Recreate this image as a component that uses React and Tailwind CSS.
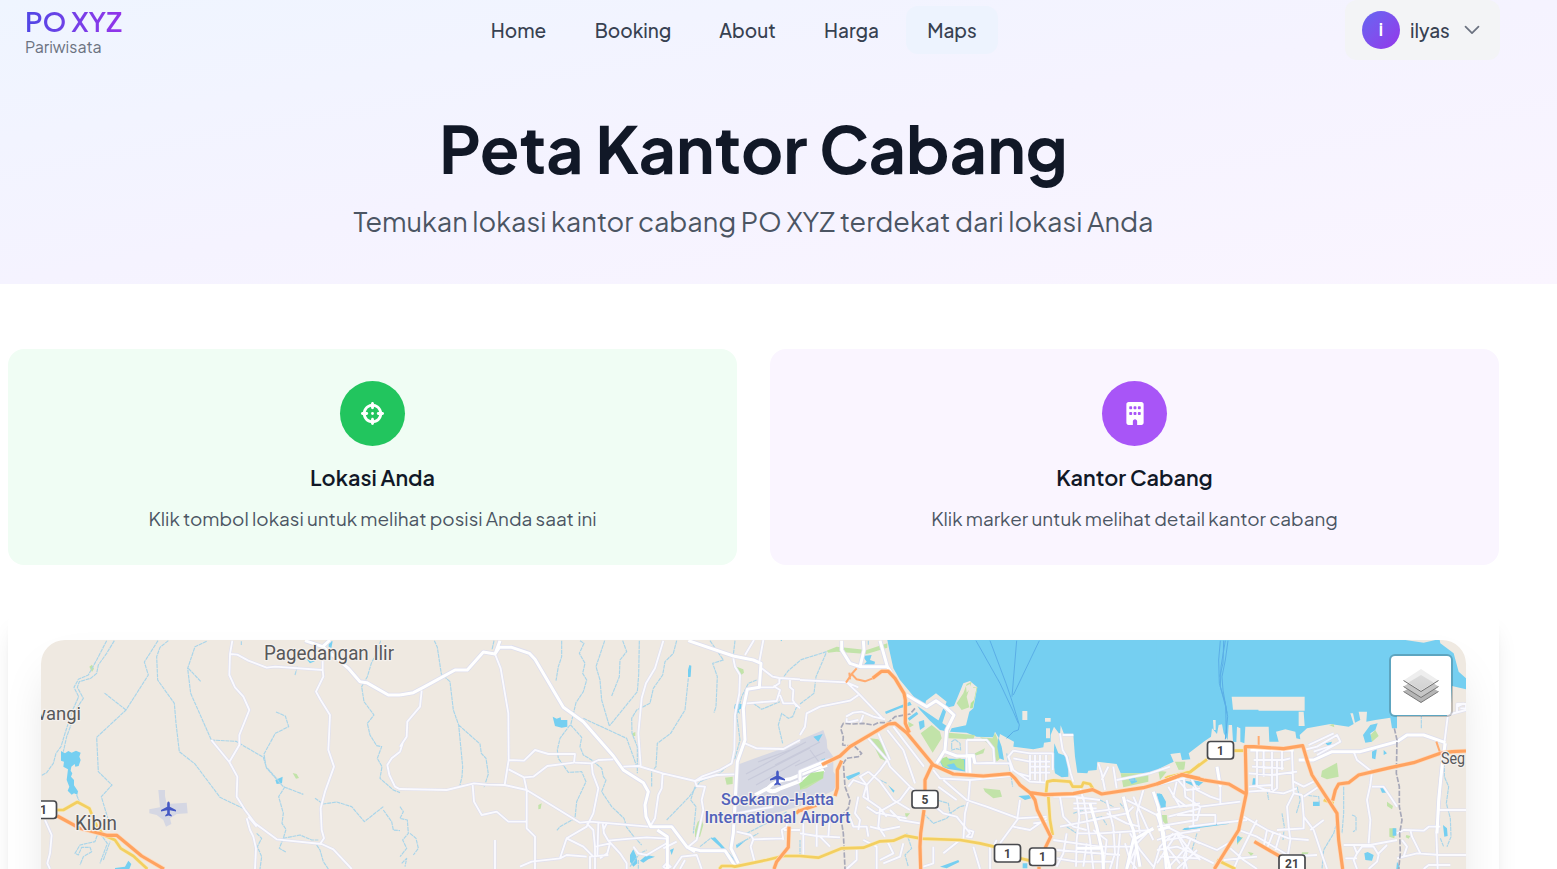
import React from "react";
import { FaBuilding, FaCrosshairs } from "react-icons/fa6";

/* Map geometry: four sheets drawn at three units per pixel. */
const sheets = [
  {
    at: "translate(0 600) scale(.33333)",
    airport: "M475,570H495V588L500,612L560,608L563,640L530,642L510,655L514,672L498,680L490,660L470,645L448,640V628L480,622Z",
    water:
      "M183,453L195,460L205,453L215,458L228,452L242,458L238,470L242,480L236,498L226,500L224,492L214,500L212,512L217,520L213,530L222,540L222,556L234,574L232,584L222,580L215,584L203,572L208,560L200,540L204,508L190,500L192,485L183,482ZM826,540L848,530L846,550L830,552ZM986,124H998L994,145L986,140ZM920,178L948,182L930,190ZM345,804L375,800L385,782L394,792L388,807H345Z",
    park: "M268,200L276,194L282,206L276,216ZM878,519L890,522L897,534L888,536Z",
    stream:
      "M320,122L290,180L265,225L235,238L222,262L236,290L218,330L195,400L183,440L168,460L160,490L140,518L124,527M343,122L320,160L295,195L290,220L272,235L238,245L232,262L250,295L232,322L214,372L200,410L190,455M474,122L433,186L445,225L378,330L290,412L295,515L336,555L304,590L325,660L290,710L285,725L240,735L225,760L235,765L245,742L270,742L275,755L250,770L240,795M378,330L312,278M505,122L480,142L470,170L473,240L523,310L528,370L538,455L585,492L660,592L735,628M620,124L585,140L563,205L572,280L634,420L708,424L790,472L800,505L850,560L910,583M565,205L602,244M828,336L856,348L866,380L826,400L792,462L798,500L838,545M855,560L836,590L850,640L846,670L858,688L850,715L838,745L858,756M850,715L900,705L935,720L955,720M945,595L970,612L1010,606L1055,620L1093,665L1150,620M1142,122L1134,150L1114,190L1102,230L1085,260L1092,305L1122,345L1102,370L1110,405L1130,437L1145,440L1132,475L1146,500L1140,535L1180,570L1200,578M724,124V135M950,735L960,750L970,785L985,807M885,225L892,200M770,700L785,715L772,740L785,770L780,807M310,780L330,725M230,585L240,610M300,700L322,730L300,790M1150,630L1175,665L1180,690L1200,692",
    minor:
      "M697,122L690,162L688,225L705,262L730,290L748,330L718,405L718,435L688,486L712,530L710,590L735,630L765,670L830,718L965,732L1000,748L1055,807M634,420L688,486M690,162L712,164L745,182L800,203L825,200L968,210L970,230L948,275L962,300L990,345L985,450L1002,500L975,575L962,625L965,690L972,715L960,732M968,140V210M1200,455L1175,475L1162,495L1168,525L1185,560L1200,568M740,655L750,690L760,710L768,745L765,807M135,660L155,705L150,760L142,790L150,807M745,650L770,680",
    major: "M915,122L968,140L1045,205L1080,245L1100,248L1165,285L1200,285M990,120L968,140",
    yellow: "M172,630H190L232,606L268,625L285,668L310,705L345,720L362,745L400,768L442,807",
    orange: "M172,648L240,685L320,706H350L425,768L492,807",
  },
  {
    at: "translate(400 600) scale(.33333)",
    airport: "M1010,495L1120,455L1200,428V618L1125,640L1010,670Z",
    water:
      "M458,350L470,356L482,352L483,360H502V380L485,383L465,378ZM868,195L874,197L872,230L864,232V210ZM1005,312H1025V325L1016,330L1020,342L1002,325ZM690,765L700,748L710,770L712,790L700,800L690,785ZM720,782L740,765L765,770L745,778L730,788ZM810,750L822,745L815,765ZM932,715L945,712L980,750L1010,785L1000,790L960,740ZM1140,118H1148L1144,124ZM1008,735L1045,715L1010,745Z",
    park: "M1010,200L1030,208L1032,218L1020,228ZM975,533L998,530V552L980,554ZM893,665L905,658L910,675L900,710L885,712V690ZM697,400L706,396V408H698ZM1195,548L1200,545V560ZM415,615L425,610L422,626L415,628Z",
    stream:
      "M103,122L112,142L124,222L150,245L160,330L176,375L188,500L186,530L180,555M176,375L240,432L244,460L258,475L265,522L252,562M282,122L276,150M485,122V170L475,200L468,242M540,122L552,130L538,160L555,190L548,220L560,240L550,275L528,308L512,375L545,412L540,440L550,465L575,480L605,505L610,530L618,540L605,575L635,620L672,655L680,682L700,708L725,735M614,122L588,200L600,240L605,300L628,378M668,122L680,155L660,180L658,230L635,288M718,122L716,225L712,275L628,378M830,122L820,160L795,185L788,225L760,265L750,310L710,330L695,355L696,400L712,440L712,520M865,235L855,330L812,400L772,430L768,500L755,515V560M550,355L680,415L700,470L712,505M510,375L480,415L472,450L475,475L505,517L545,515L558,545L530,605L525,655L480,680L470,692M930,122L970,180L938,190L952,230L948,320L942,338M1070,240L1045,250L1025,290L1010,345L1020,420L1005,475L960,520L900,545L868,590L800,660M885,560L872,600L888,620L880,700M1200,182L1165,212L1140,245M1190,320L1178,350L1165,355L1145,340L1135,375L1148,430M1060,310L1085,328L1140,305M1005,122L1000,165M0,620L10,635L0,655L22,660L25,700L8,720L20,745L0,770M30,700L48,715L55,745L40,765M1040,700L1100,670L1160,635M5,790L20,775L15,800M1010,735L1075,700M690,800L720,760L740,750M900,740L935,712M715,780V807",
    minor:
      "M65,272L60,320L22,365L20,410L0,440M8,430L0,455M285,162L302,205L325,340L326,480L314,555M326,480L372,482L405,450L445,462L525,462L522,488L442,498L400,530L372,532L380,570V685L405,710V807M525,488L575,490L595,480L640,478M575,490L578,520L595,565L580,640L560,680L500,715L480,775M326,508L372,532M0,567L140,570L222,550L260,554L314,555L380,570L540,668L570,665L745,680M218,555L222,605L245,645L290,635L325,665L380,664M670,500L715,498L788,520L885,543L890,558L915,560L905,600L910,630L890,720L865,740M788,520L785,565L775,585L765,655L750,680M790,122L765,205L738,250L725,295L715,400L722,498M885,543L950,525L1003,523M1000,175L1005,200L1020,225L1018,280L1005,345L1003,450L995,490L960,510L905,530L885,543M1090,120L1078,185M1062,120L1035,165M1085,205L1118,230L1138,234L1200,238M1138,234V250L1120,262H1078M1170,238V262L1180,270L1178,300L1190,320M1040,310L1130,303L1140,270L1120,258M1140,285L1150,310H1185L1200,325M1035,430L1070,445L1150,447L1200,420M285,720V807M360,800L395,785L480,775L500,765L560,770M500,715L550,740L580,770M560,670L580,690L585,740V807M585,740L630,730L622,760L600,775M595,670L592,770M608,670L612,700L625,722L700,715L740,712L800,716M620,670L610,690M625,722L660,760L680,790L680,807M625,765L570,770V807M800,730L740,765L715,760L700,740M830,725L790,745M820,807L845,770L890,765L905,807M840,807L855,780M1010,695L1052,705L1060,718L1150,715M1060,718L1052,740L1065,790M1160,640V680L1145,690L1150,720M1010,640L1120,620M1005,665L1120,655M1152,690H1200M790,800L800,790L812,800L800,807Z",
    major:
      "M0,285L40,278L70,262L165,210H202L250,156L285,162L298,142H335L388,160L405,178L490,322L550,365L640,468L670,510L730,548L745,575L735,615L738,650L752,680H815L862,742L900,752H975L1000,790L1010,803M285,162L300,122M772,690L802,710V807M865,122L1000,168L1060,180L1083,190L1078,262L1042,268L1030,325L1035,420L1012,485L1000,700L993,745L1015,790M860,740L885,755",
    yellow: "M958,807L965,798H995L1005,800L1100,780L1150,768H1200",
    orange: "M1122,807L1130,785L1165,742L1167,680M1188,640L1200,630",
  },
  {
    at: "translate(800 600) scale(.33333)",
    airport: "M0,420L70,390L80,420L82,445L100,470V515L118,540L100,572L0,618Z",
    sea: "M262,120L268,150L280,205L300,240L325,270L345,295L375,318L378,302L408,280L440,305L432,325L462,318L490,250L510,243L532,262L520,325L508,335L498,376L455,385L450,395L500,398L530,410L580,412L585,395L597,415L600,402L642,425L640,440L700,448L730,442L732,428L752,425V405L762,380L780,404L782,376L792,402L820,405L825,470L832,518L862,520L865,512L890,510L892,485L950,492L962,520L1045,520L1075,508V120Z",
    water:
      "M188,168L215,165L210,180L225,185L222,200L190,195L200,185ZM352,318L450,385L445,395L420,390L390,362L360,330ZM255,335L330,305L335,315L300,325L258,342ZM323,355L350,335L355,342L328,362ZM356,365L372,360L374,380L360,390ZM137,530L178,515L180,522L145,540ZM264,555L284,572L280,578ZM595,412L605,440L612,480L598,475L592,440ZM763,430L775,460L805,470V530L785,532L765,520L760,490ZM1070,580L1085,582L1098,605L1095,632L1078,628ZM655,588L692,585L694,595L675,600ZM1150,685L1200,678V684L1155,690ZM1140,540L1200,550L1180,558ZM430,325L438,335L425,375L412,370ZM40,410L68,402L55,425ZM668,790H682V805H668ZM420,800L475,780L478,786L440,805ZM62,480L75,475V490ZM415,475L500,478V515L430,505Z",
    park: "M80,152L110,140L200,150L262,130V143L200,162L110,155L85,158ZM470,310L490,280L500,252L515,245L500,290L508,322L485,330ZM395,375L420,395L425,415L398,458L362,400ZM445,398L525,405L520,418L445,415ZM540,412L578,415L585,398L600,435L606,470L590,485L575,440ZM210,415L235,418L265,455L255,482L240,475ZM550,565L600,570L606,590L580,595L555,575ZM525,460L555,445L550,460L522,468ZM962,520H1045V545L970,562ZM1125,485H1155L1150,510L1135,505ZM1082,645H1100L1105,685L1090,660ZM325,365L342,375L325,385ZM315,640L330,640L318,655ZM0,550L30,530L68,515L70,535L20,565L0,570ZM1080,540L1075,512L1100,515Z",
    isle: "M418,478L440,470L450,482L480,475L492,480L494,512L470,502L462,490L440,495L450,505L430,500ZM520,262L532,262L518,325H510Z",
    pond: "M985,535L1000,528L1012,545L995,552Z",
    land: "M667,333H682V360H667ZM735,354H752V365H735ZM738,385H750V415H738ZM498,258L510,252L512,265L500,278ZM515,265L530,262L522,300L512,310Z",
    stream:
      "M80,155L0,180M78,160L48,230L42,280L0,312M0,770V720M205,122V135M455,440V425L465,418L480,430L482,450L470,446L455,450ZM320,700L335,745L315,765L325,800M390,570L410,600L445,610L450,640L480,620L500,615M370,640L400,670L440,655L455,640M620,460L632,520L638,560M800,680L830,700L835,760M820,640L850,630M990,540H1010M240,540L260,550M860,660L905,650L920,675M960,610L985,640M900,600L940,620",
    ferry: "M528,122L600,250L640,335L655,370M570,122L618,250L635,300L658,375L655,390L640,395L620,415M650,122L636,290M718,122L640,285",
    minor:
      "M0,240L140,247L175,280L250,358M140,247L175,262M175,285L150,302L60,320L20,340L15,380L0,405M138,350L160,338L185,335L220,350L255,358M140,355V368L175,360M180,370L190,345M200,410L262,480L270,500L330,560M235,400L270,480M262,390L310,450L345,550M280,380L372,500M262,480L240,510L200,555L205,600M205,515L180,530L200,555L190,590L240,625L260,650M205,515L240,545L280,600L330,630M330,560L300,600L230,640L200,620M330,560L372,590M0,700L50,708L120,712M50,640V740M90,640L85,712M10,640V765M145,640L160,680H200L205,710M175,590L165,640L180,660L175,690M200,555L160,540L145,560M240,625L235,680L255,710M270,630L300,660L360,670M0,660H45M240,640L320,655M210,680L250,690L300,680M400,510L420,535L510,540L630,528M510,540L505,600L495,640L490,720M430,540L500,600L560,620L655,655M415,560L470,600M400,615L430,640L470,650L510,700L500,710L515,712L520,695L505,690M500,420H560L580,445L583,488L522,490M500,420V520M522,490V465H500M522,490H630L635,515M640,452L625,470L640,510L690,545L740,548M640,452L690,460H758V510M640,475L690,485H750M690,465V540M705,465V540M720,465V545M738,465V545M690,500H750M690,518H750M655,520L690,530M660,600L652,655L740,650M655,655L600,730M640,680L690,690L740,655M780,400L788,450L800,470L812,520L820,545M788,405H820M760,590L820,590L900,600M780,590L790,650L820,680L860,690M830,590L838,650L830,720L828,800M850,590L858,640L870,720L880,807M920,600L940,680L945,760L930,807M895,490L905,520L915,570M925,500L905,540M940,500L950,565M950,540L1050,520L1110,500M780,680L830,670L880,660L980,640L1000,620M820,610H890M820,625H890M840,640L960,625M800,700L790,760L770,800M760,720L830,730L900,740L1000,740M770,750L830,755L960,765M770,775L830,785L940,785M830,700L900,700L980,695L1060,690M840,560L850,600M980,600L1080,650M1000,590L1040,680L1060,720M1030,570L1010,640L1020,700M920,640L980,670L1020,680M880,690L920,720L910,807M860,730L850,800M960,700L950,807M975,730L990,780L1010,807M990,700L1020,750L1060,800M1010,740L980,807M1040,700L1010,730L1000,807M1100,680L1140,700L1200,690M1105,650L1200,625M1100,720L1160,710L1200,730M1105,560L1140,620L1200,610M1130,545L1120,590L1160,620M1120,700L1080,740L1060,807M1130,700L1160,760L1150,807M1100,740L1140,790M1080,770L1200,775M1180,560V680M1125,530L1160,570L1200,565M0,600H30M250,790L300,770L310,730M190,720L230,740V807M60,710L90,740M170,745V780L140,807M260,720L280,760L240,780M590,720L580,740M520,740L540,807M570,740V807M480,720L430,760M400,740V790L370,800M740,665L700,670",
    major:
      "M125,122V150L150,190L180,200H262L240,122M180,200L192,150L190,122M262,200L275,220M320,285L345,300L380,320L408,302L440,325L462,345L440,390L435,450L410,490M435,455L470,468H520L525,490M508,465L510,520M870,610L890,680L908,760L910,807M970,590L985,650L1000,690L1020,800M1060,575L1075,620L1090,720L1110,807M900,745H830M1060,685L1000,720L980,807M1075,690L1110,680M0,545L0,515L60,490L90,480",
    border: "M345,325L330,342L285,350L265,368H235L220,375L190,370L160,372L130,370L122,385L130,410L128,435L165,440L185,460L175,470L140,475L130,490L135,560L150,600L145,625L122,650L130,700L135,807",
    yellow: "M0,768L55,773L125,745L190,743L240,724L280,722L315,707L365,716L480,720L540,730L582,740M640,770L690,782M738,580L742,545L760,541L810,545L818,560L845,560L850,548L870,552L880,568M745,590L750,660L758,705M1095,535L1170,516L1200,492",
    orange:
      "M66,494L120,468L150,440L265,372L285,370L320,398L400,495L460,522L550,528L630,521L645,535L660,555L690,578L735,584L820,581L878,569L905,582L1030,563L1070,552L1145,524L1200,536M218,235L245,214H265L285,235L312,280L316,300V370L328,398M398,490L375,540V570M372,630L362,700L360,740L362,807M690,578L705,600L712,630L752,710L735,745M717,800V807M125,482L112,510V565L105,588M0,632L50,615",
    ramp: "M218,235L195,244L170,238L155,222L170,205M155,222L138,248M148,218L150,238",
  },
  {
    at: "translate(1157 600) scale(.33333)",
    sea: "M-2,120V510L50,485L40,462L70,458L75,480L100,478L95,460L140,425L162,410L165,385L180,402L185,375L195,373L200,400L212,420L215,375H225L228,425L238,426L240,380L250,385V425L262,430L265,380H335L337,425L365,425L357,395L385,388L415,395L418,415L430,418L428,405L450,385L520,372L575,380L590,372L580,340H588L594,368L610,360L605,335H630L628,365L655,360L700,353L705,385H720V348H880L885,258L927,268V235L905,215L890,160L850,130L848,120Z",
    land: "M224,290H443V332H305L304,329H228ZM425,335H440L443,378H425ZM168,360H176V390H170ZM745,120H835L800,128Z",
    water:
      "M618,405L640,375L662,370L655,390L640,400L645,425L625,428ZM645,455L660,445L655,478L645,475ZM680,450L690,460L680,465ZM668,560L688,568L690,578L675,578ZM858,675L870,685L872,708L862,710ZM622,760L632,756L650,765L645,782L625,780ZM288,535H296V553L285,560ZM707,685H718V707H707ZM8,580L20,595L28,630L10,628L0,600ZM468,605H488V618H468ZM75,688L215,665V672L80,690ZM720,785L728,800V807H718ZM98,540L140,545L125,558ZM240,705L255,715L240,730ZM505,430L525,425L518,442Z",
    park: "M55,487L85,485L82,508L65,510ZM495,512L540,488L545,530L510,538L492,530ZM640,405L655,390L665,408L645,425ZM516,375L530,372L532,382ZM690,605L708,618L705,628L690,618ZM697,685L716,685L712,715L697,710ZM748,705L760,708L755,716L746,712ZM10,645H28L32,680L15,660ZM240,710L258,712L240,735ZM272,755L290,760L282,768ZM435,757H455L445,775L432,770Z",
    stream:
      "M862,490V530L875,560L868,610L880,655L882,710L870,740M585,645L597,650V690L588,695M440,585L485,590L487,608M375,640L382,680L378,720M793,345V385M545,650L530,700L500,750L495,807M330,570L335,600M420,560L430,600L418,640M120,700L105,750M560,560V640L555,700M850,715L860,740",
    ferry: "M190,122L185,180L187,250L205,310L212,350L205,418M213,122L205,180L195,230L198,270L210,340M200,122L198,190L188,230M205,122L192,200L190,260L206,320L208,400",
    minor:
      "M0,555L40,545L100,530M80,530L85,590L130,620L250,605M100,530L120,570L160,590L190,600M190,550V610M130,620L120,660L0,680M60,645L175,645V670L95,680M0,630L60,620L120,615M180,670L270,660M245,690L230,720L180,750L60,700M60,700L0,720M60,700L0,790M60,700L90,740L130,780M90,740L30,807M100,720L80,770L90,807M120,750L60,807M0,750L60,740L110,760L170,790M290,480H380L400,475M285,500L380,505M275,520L345,525L420,515M300,450V560L340,575L380,580L420,565M320,450V530M345,455V570M360,480V565L345,575M375,450V510M405,450L408,540L410,580L435,585M275,575L340,570M275,560L345,555M410,580L390,620L395,680L400,720L390,780M435,585L440,650L470,690L490,750L510,807M440,590L485,560L480,540L440,560L410,545M260,650L330,690L395,715L455,720M245,690L300,710L350,740L400,770M330,690L320,740M350,695L330,745M360,690L440,685V650M370,700L355,750M300,660L270,720L250,760L230,807M220,745L260,780L300,807M200,780L300,770M400,770L480,765M440,450L480,440L540,405L550,425L480,465M455,435L530,400M470,455L530,435M590,455L600,480L645,515L640,555L630,600L640,660L635,730M645,560L680,560L700,590L720,620M560,735L640,735L720,720M590,735L600,760L590,780L600,807M600,760L615,740H650L665,765L660,785L635,807M565,775H600M665,760L690,735M720,700L740,690L800,692L815,680H850M735,720L750,740L740,770L720,775M740,770L780,760L850,765M760,690L765,710L780,740L790,760M845,630H927M840,765L927,765M800,807L815,795H880M900,335V312H927V325H910M872,350L862,430V460L850,540L845,630L838,700L842,807M870,345L927,330M900,320L920,310M500,660L460,690",
    major: "M425,480L470,480L525,455L610,455L720,425L750,405L800,405L865,428M865,430L858,470L845,600L840,700M280,450L410,450M0,640L20,700L28,807M180,500L190,560",
    border: "M712,385L720,420L718,520L727,560V620L735,660L728,700L730,760L725,807",
    yellow: "M30,532L100,516L150,478M232,452H262M180,780L235,807M500,600L530,610",
    orange:
      "M0,552L75,524L140,540L215,552L264,580M172,807L245,690L268,580L265,440H290L380,446L437,437L450,480L465,525L540,640L545,720L557,807M527,602L535,570L545,552L575,548L605,525L700,503L770,488L850,460M850,460L885,455L927,453M292,725L370,770",
    ramp: "M305,408V436M850,460L838,425",
  },
];

const strokes = [
  ["stream", "#a9d5ea", 3.5, "12 2"],
  ["minor", "#e0e0ee", 9.5],
  ["major", "#dedfee", 14],
  ["minor", "#fafaff", 5.5],
  ["major", "#ffffff", 9],
  ["border", "#a7a8b8", 5, "16 5"],
  ["yellow", "#f8e9bd", 12],
  ["yellow", "#f3cf60", 8],
  ["ramp", "#ffab70", 6],
  ["orange", "#ffd9bb", 13.5],
  ["orange", "#ffa360", 9.5],
];

const fills = [
  ["airport", "#d5d7e3"],
  ["sea", "#75cff1"],
  ["park", "#c2e3a9"],
  ["water", "#75cff1"],
  ["isle", "#b3e49b"],
  ["pond", "#75cff1"],
  ["land", "#efe9e1"],
];

function Layer({ name, ...rest }) {
  return sheets.map((s) =>
    s[name] ? <path key={name + s.at} d={s[name]} transform={s.at} {...rest} /> : null
  );
}

function Plane({ x, y }) {
  return (
    <path
      transform={`translate(${x} ${y})`}
      fill="#4458c4"
      d="M0-7.5C.9-7.5 1.3-6.4 1.3-5.2V-2.2L7.5 1V2.6L1.3 1.2V4.6L3.2 6.2V7.4L0 6.6L-3.2 7.4V6.2L-1.3 4.6V1.2L-7.5 2.6V1L-1.3-2.2V-5.2C-1.3-6.4-.9-7.5 0-7.5Z"
    />
  );
}

function Shield({ x, y, label }) {
  return (
    <g transform={`translate(${x} ${y})`}>
      <rect x="-13" y="-9" width="26" height="17.5" rx="3" fill="#fff" stroke="#47484c" strokeWidth="1.7" />
      <text y="4.2" textAnchor="middle" fontFamily="Roboto, sans-serif" fontWeight="700" fontSize="12" fill="#444">
        {label}
      </text>
    </g>
  );
}

function Label({ x, y, w, size, fill = "#58585a", weight = 400, children }) {
  return (
    <text
      x={x}
      y={y}
      textLength={w}
      lengthAdjust="spacingAndGlyphs"
      fontFamily="Roboto, sans-serif"
      fontSize={size}
      fontWeight={weight}
      fill={fill}
      stroke="#f4f0ec"
      strokeWidth="2.5"
      strokeLinejoin="round"
      paintOrder="stroke"
    >
      {children}
    </text>
  );
}

function CityMap() {
  return (
    <svg viewBox="41 640 1425 229" className="block h-[229px] w-[1425px]">
      <rect x="41" y="640" width="1425" height="229" fill="#efe9e1" />
      {fills.map(([name, fill]) => (
        <Layer key={name} name={name} fill={fill} />
      ))}
      <Layer name="ferry" fill="none" stroke="#5aaee6" strokeWidth="3" />
      <g fill="none" stroke="#c8cada" strokeWidth="1.2">
        <path d="M746,774L806,742M748,780L810,748M756,785L800,760M758,762L790,750M775,765L820,742M795,766L825,752M810,750L825,770" />
      </g>
      <path d="M755,795L768,788Q775,780 790,779L815,769L827,765" fill="none" stroke="#fff" strokeWidth="3.5" />
      <path d="M766,788Q771,794 779,789L800,781L824,770" fill="none" stroke="#fff" strokeWidth="4" />
      <path d="M800,783L811,773L824,771L823,778L806,786L800,789Z" fill="#b3e49b" />
      {strokes.map(([name, stroke, width, dash]) => (
        <Layer
          key={name + stroke}
          name={name}
          fill="none"
          stroke={stroke}
          strokeWidth={width}
          strokeDasharray={dash}
          strokeLinejoin="round"
        />
      ))}
      <Plane x={168.5} y={809} />
      <Plane x={777.5} y={778} />
      <Label x={264} y={660} w={130} size={20}>Pagedangan Ilir</Label>
      <Label x={32} y={720} w={49} size={19}>wangi</Label>
      <Label x={75} y={830} w={42} size={19.5}>Kibin</Label>
      <Label x={1441} y={764} w={24} size={16.5}>Seg</Label>
      <Label x={721} y={805} w={113} size={16} fill="#5262ba" weight={500}>Soekarno-Hatta</Label>
      <Label x={704.5} y={823} w={146} size={16} fill="#5262ba" weight={500}>International Airport</Label>
      <Shield x={43.5} y={810} label="1" />
      <Shield x={925} y={799.5} label="5" />
      <Shield x={1007.5} y={853.5} label="1" />
      <Shield x={1042.5} y={857} label="1" />
      <Shield x={1220.5} y={750.5} label="1" />
      <Shield x={1292} y={864} label="21" />
    </svg>
  );
}

function LayersIcon() {
  return (
    <svg viewBox="0 0 36 36" className="h-9 w-9">
      <defs>
        <linearGradient id="sheet" x1="0" y1="0" x2="0" y2="1">
          <stop offset="0" stopColor="#dcdcdc" />
          <stop offset="1" stopColor="#d2d2d2" />
        </linearGradient>
      </defs>
      <path d="M.5 23.500L18 12.500L35.500 23.500L18 34.500Z" fill="#b5b5b5" />
      <path d="M.5 23.500L18 34.500L35.500 23.500" fill="none" stroke="#777" />
      <path d="M.5 18.500L18 7.500L35.500 18.500L18 29.500Z" fill="#c6c6c6" />
      <path d="M.5 18.500L18 29.500L35.500 18.500" fill="none" stroke="#777" />
      <path d="M.5 12.500L18 1L35.500 12.500L18 23.500Z" fill="#eee" />
      <path d="M5.500 14.500L18 7L30.500 14.500L18 22.500Z" fill="url(#sheet)" />
      <path d="M.5 12.500L18 23.500L35.500 12.500" fill="none" stroke="#6d6d6d" />
    </svg>
  );
}

const links = [
  { label: "Home", box: "w-[99px]" },
  { label: "Booking", box: "w-[114px]" },
  { label: "About", box: "w-[99px]" },
  { label: "Harga", box: "w-[93px]" },
  { label: "Maps", box: "w-[92px] bg-[#edf3fe]" },
];

function Navbar() {
  return (
    <header className="flex h-[60px] items-center justify-between pr-[57px] pl-[25px]">
      <div className="w-[97px] pt-[1px] whitespace-nowrap">
        <div className="w-fit bg-linear-to-r from-[#4f46e5] to-[#9333ea] bg-clip-text text-[27.2px] leading-8 font-semibold text-transparent">
          PO XYZ
        </div>
        <div className="text-[16px] leading-[19px] text-[#6b7280]">Pariwisata</div>
      </div>
      <nav className="flex gap-[8px]">
        {links.map(({ label, box }) => (
          <a
            key={label}
            className={`flex h-12 items-center justify-center rounded-xl text-[19px] font-medium text-[#374151] ${box}`}
          >
            {label}
          </a>
        ))}
      </nav>
      <button className="flex h-[60px] w-[155px] items-center rounded-xl bg-[#f3f4f6] pl-[17px]">
        <span className="flex size-[38px] items-center justify-center rounded-full bg-linear-to-br from-[#6366f1] to-[#9333ea] text-[17px] font-bold text-white">
          i
        </span>
        <span className="ml-[10px] text-[19px] font-medium text-[#374151]">ilyas</span>
        <svg viewBox="0 0 16 10" className="ml-[14px] h-[10px] w-4 fill-none stroke-[#6b7280] stroke-[1.700]">
          <path d="M1.500 1.700L8 8.200L14.500 1.700" strokeLinecap="round" strokeLinejoin="round" />
        </svg>
      </button>
    </header>
  );
}

function InfoCard({ tone, dot, icon, title, text }) {
  return (
    <article className={`flex h-[216px] flex-col items-center rounded-2xl pt-8 whitespace-nowrap ${tone}`}>
      <span className={`flex size-[65px] items-center justify-center rounded-full pb-[1px] text-white ${dot}`}>
        {icon}
      </span>
      <h2 className="mt-4 text-[21.6px] leading-8 font-semibold text-[#111827]">{title}</h2>
      <p className="mt-[10px] text-[18.9px] leading-7 text-[#4b5563]">{text}</p>
    </article>
  );
}

export default function App() {
  return (
    <div className="h-[869px] overflow-hidden bg-white font-['Plus_Jakarta_Sans',Inter,sans-serif]">
      <section className="h-[284px] bg-linear-to-br from-[#eff5ff] via-[#f5f3ff] to-[#faf5ff]">
        <Navbar />
        <div className="flex w-[1507px] flex-col items-center pt-12 whitespace-nowrap">
          <h1 className="text-[64.8px] leading-[80px] font-bold text-[#111827]">Peta Kantor Cabang</h1>
          <p className="mt-[13px] text-[27px] leading-10 text-[#4b5563]">
            Temukan lokasi kantor cabang PO XYZ terdekat dari lokasi Anda
          </p>
        </div>
      </section>
      <main className="ml-2 w-[1491px] pt-[65px]">
        <div className="grid grid-cols-2 gap-[33px]">
          <InfoCard
            tone="bg-[#f0fdf4]"
            dot="bg-[#22c55e]"
            icon={<FaCrosshairs className="size-[23px]" />}
            title="Lokasi Anda"
            text="Klik tombol lokasi untuk melihat posisi Anda saat ini"
          />
          <InfoCard
            tone="bg-[#faf5ff]"
            dot="bg-[#a855f7]"
            icon={<FaBuilding className="h-[23px] w-[18px]" />}
            title="Kantor Cabang"
            text="Klik marker untuk melihat detail kantor cabang"
          />
        </div>
        <div className="mt-[43px] h-[420px] rounded-2xl bg-white p-8 pl-[33px] shadow-xl">
          <div className="relative h-[360px] w-[1425px] overflow-hidden rounded-3xl shadow-[0_25px_50px_-12px_rgba(0,0,0,0.14)]">
            <CityMap />
            <button className="absolute top-[14px] right-[13px] flex h-[63px] w-16 items-center justify-center rounded-md border-2 border-black/20 bg-white bg-clip-padding">
              <LayersIcon />
            </button>
          </div>
        </div>
      </main>
    </div>
  );
}
